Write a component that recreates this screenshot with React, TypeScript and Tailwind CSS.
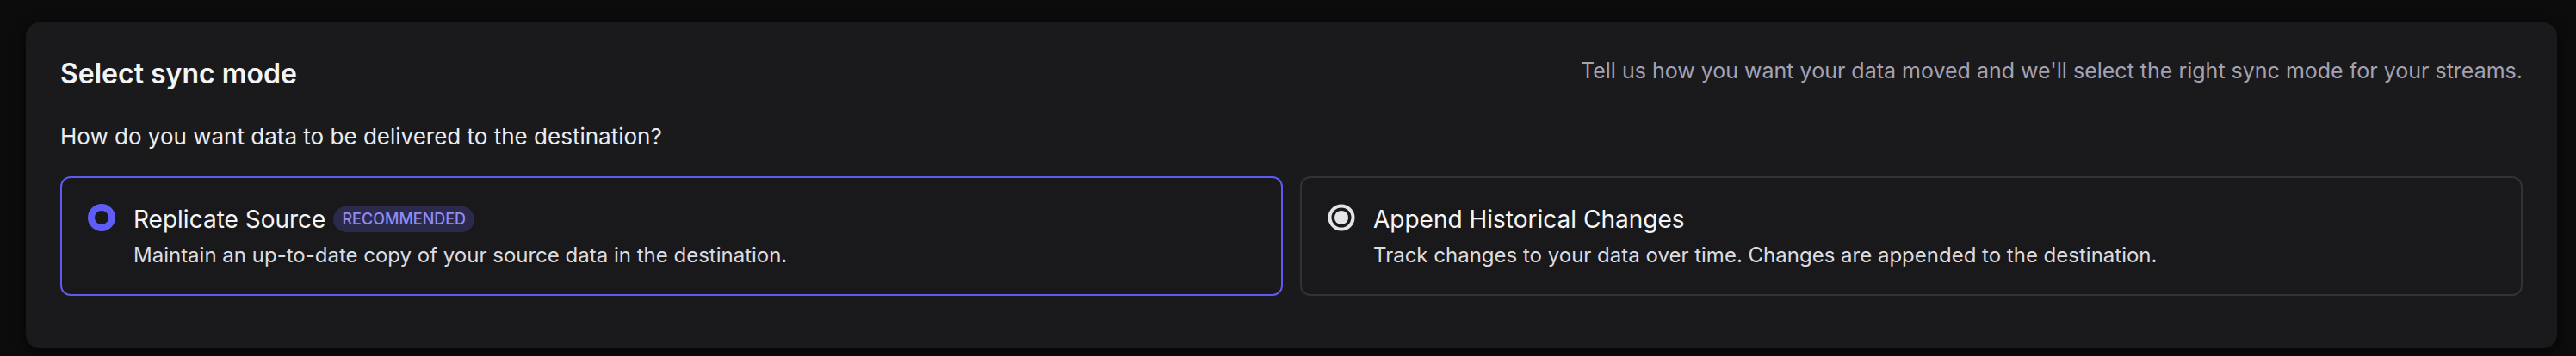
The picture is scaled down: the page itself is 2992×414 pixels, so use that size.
import React from "react";

function RadioSelected() {
  return (
    <svg width="32" height="32" viewBox="0 0 32 32" className="shrink-0">
      <circle cx="16" cy="16" r="12" fill="none" stroke="#5f5df7" strokeWidth="8" />
    </svg>
  );
}

function RadioIdle() {
  return (
    <svg width="32" height="32" viewBox="0 0 32 32" className="shrink-0">
      <circle cx="16" cy="16" r="13.5" fill="none" stroke="#e4e4e7" strokeWidth="4" />
      <circle cx="16" cy="16" r="8" fill="#e4e4e7" />
    </svg>
  );
}

function Option({
  selected,
  title,
  desc,
  badge,
}: {
  selected: boolean;
  title: string;
  desc: string;
  badge?: string;
}) {
  return (
    <div
      className={
        selected
          ? "flex gap-[21px] rounded-[12px] border-2 border-[#5c5bf2] bg-[#19191c] pl-[30px] pr-[30px] pt-[30px] pb-[29px]"
          : "flex gap-[21px] rounded-[12px] border-2 border-[#323138] bg-[#19191c] pl-[30px] pr-[30px] pt-[30px] pb-[29px]"
      }
    >
      <div>{selected ? <RadioSelected /> : <RadioIdle />}</div>
      <div className="flex flex-col">
        <div className="flex h-[36px] items-center gap-[9px]">
          <span className="text-[28px] leading-[36px] font-normal text-[#f4f4f5]">{title}</span>
          {badge && (
            <span className="flex h-[30px] items-center rounded-full bg-[#2c2a4c] px-[10px] text-[18px] leading-[30px] font-medium text-[#908df2]">
              {badge}
            </span>
          )}
        </div>
        <div className="mt-[8px] text-[24px] leading-[32px] text-[#dcdce0]">{desc}</div>
      </div>
    </div>
  );
}

export default function App() {
  return (
    <div
      className="h-[414px] w-[2992px] bg-[#0c0c0d] pl-[30px] pr-[22px] pt-[26px]"
      style={{ fontFamily: "Inter, 'Noto Sans', sans-serif" }}
    >
      <div className="flex h-[379px] flex-col rounded-[16px] bg-[#1a1a1d] px-[40px] pt-[40px] pb-[60px] shadow-[0_4px_16px_rgba(0,0,0,0.6)]">
        <div className="flex items-start justify-between">
          <h1 className="text-[32px] leading-[40px] font-semibold text-[#f4f4f5]">Select sync mode</h1>
          <p className="text-[25px] leading-[32px] text-[#a3a2b2]">
            Tell us how you want your data moved and we'll select the right sync mode for your streams.
          </p>
        </div>
        <p className="mt-[35px] text-[26px] leading-[36px] text-[#ececef]">
          How do you want data to be delivered to the destination?
        </p>
        <div className="mt-[28px] grid grid-cols-2 gap-[20px]">
          <Option
            selected
            title="Replicate Source"
            badge="RECOMMENDED"
            desc="Maintain an up-to-date copy of your source data in the destination."
          />
          <Option
            selected={false}
            title="Append Historical Changes"
            desc="Track changes to your data over time. Changes are appended to the destination."
          />
        </div>
      </div>
    </div>
  );
}
